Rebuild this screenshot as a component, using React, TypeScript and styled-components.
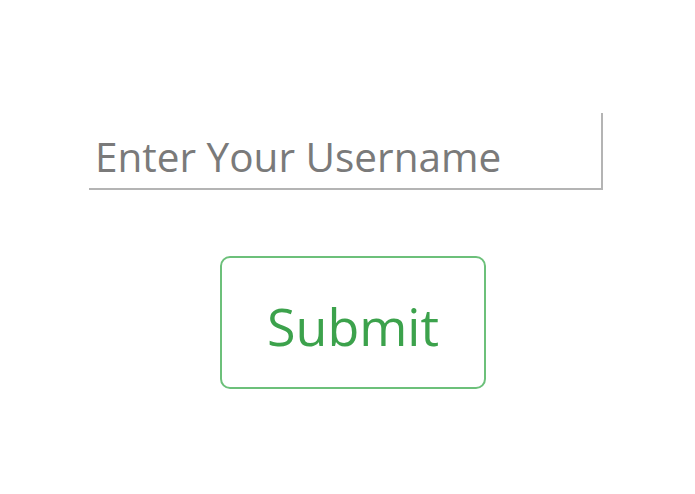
import React from "react";
import styled, { createGlobalStyle } from "styled-components";

const Global = createGlobalStyle`
  html, body { margin: 0; padding: 0; background: #ffffff; }
  body { font-family: "Open Sans", "Noto Sans", sans-serif; }
`;

const Form = styled.form`
  display: flex;
  flex-direction: column;
  align-items: flex-start;
  padding-top: 113px;
`;

const Input = styled.input`
  box-sizing: border-box;
  margin-left: 89px;
  width: 514px;
  height: 77px;
  padding: 12px 0 0 6px;
  border: none;
  border-right: 2px solid #b4b4b4;
  border-bottom: 2px solid #b4b4b4;
  outline: none;
  background: transparent;
  font-family: "Open Sans", "Noto Sans", sans-serif;
  font-size: 40.5px;
  color: #333;
  &::placeholder {
    color: #7a7a7a;
  }
`;

const SubmitButton = styled.button`
  box-sizing: border-box;
  margin: 66px 0 0 220px;
  width: 266px;
  height: 133px;
  padding: 6px 0 0 0;
  border: 2px solid #6cc07a;
  border-radius: 10px;
  background: #ffffff;
  color: #3ca24c;
  font-family: "Open Sans", "Noto Sans", sans-serif;
  font-size: 52px;
  cursor: pointer;
`;

export default function App() {
  return (
    <>
      <Global />
      <Form onSubmit={(e) => e.preventDefault()}>
        <Input type="text" placeholder="Enter Your Username" />
        <SubmitButton type="submit">Submit</SubmitButton>
      </Form>
    </>
  );
}
